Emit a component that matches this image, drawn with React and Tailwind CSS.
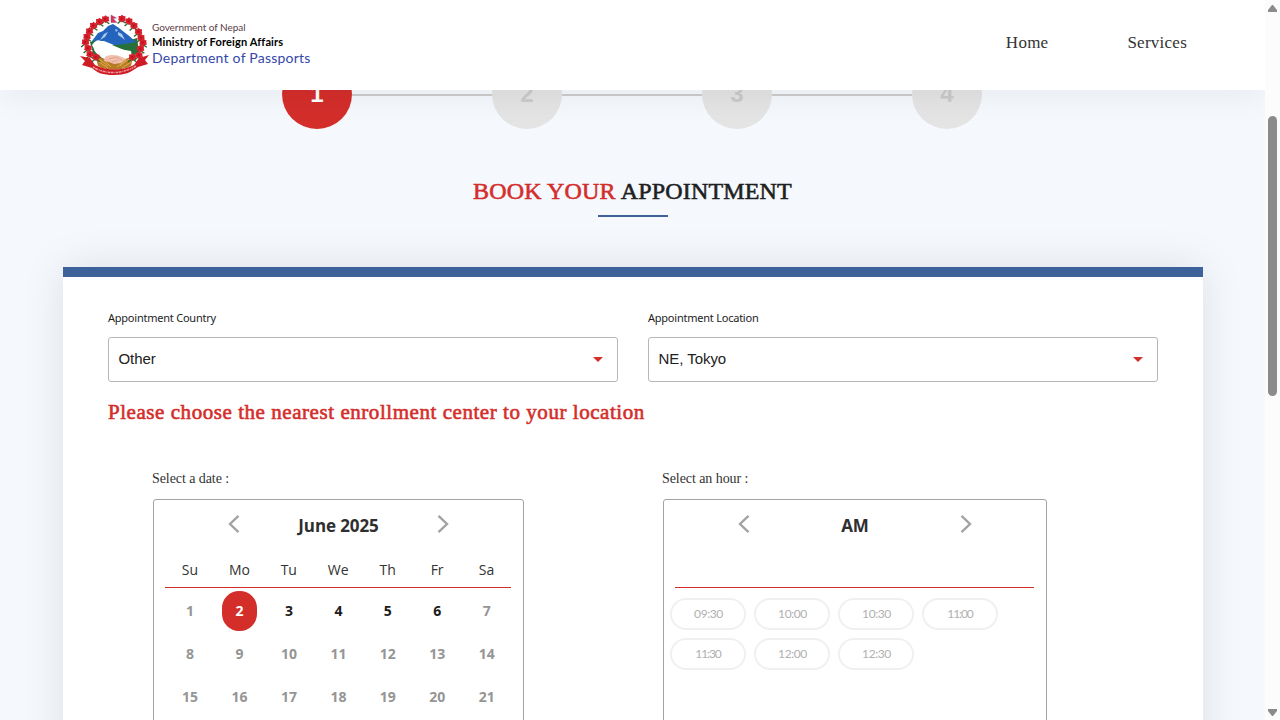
import React from "react";

const serif = "font-['Liberation_Serif',serif]";

function Rhododendron({ x, y }) {
  return (
    <g transform={`translate(${x} ${y}) scale(1.1)`}>
      <path d="M-1 2L-4 4.500M0 2L3.500 4.300" stroke="#2f6b2b" strokeWidth="1.300" />
      <path d="M0-3.300L1.300-2.300L3.200-2.100L3 0L3.500 1.900L1.300 2.400L0 3.600L-1.400 2.400L-3.500 1.700L-3 0L-3.200-2.200L-1.300-2.300Z" fill="#d81f2c" />
      <circle cx="-.3" cy=".2" r="1" fill="#b5101f" />
    </g>
  );
}

const flowers = [
  [25.5, 5], [19.5, 7.5], [13.5, 11.5], [9.5, 17], [7, 22.5], [5.5, 28], [8, 34], [10, 40], [16, 43],
  [42, 4.5], [49, 7], [54, 11.5], [58.5, 17.5], [61, 23.5], [63, 28.5], [60.5, 34.5], [59, 41], [52.5, 43],
];

function Emblem() {
  return (
    <svg width="70" height="62" viewBox="0 0 70 62" fill="none">
      <path d="M32 31L44 28L57 24L59 38L52 43L44 36ZM10 28L18 25L14 36L24 46L14 43Z" fill="#28703a" />
      <path d="M12 27L18 19L23 17L28 12L33 10L39 14L44 18L48 21L56 28L45 30L34 31L24 27Z" fill="#2564bd" />
      <path d="M35 15L38 16L36 18ZM38 18L42 20L45 26L41 23L38 21ZM24 20L28 18L25 23L20 26Z" fill="#a9c9ef" />
      <path d="M12 31C16 25 20 25 23 29C28 33 34 32 39 35L51 37L52 43L45 47L26 46L16 39Z" fill="#fff" />
      <path d="M16 44C23 42 26 47 34 48C43 49 46 43 53 43L51 52C42 57 26 57 18 52Z" fill="#b77b27" />
      <path d="M19 45L28 52M19 48L28 54M50 44L40 52M51 48L42 54M24 46L31 53M46 46L37 53" stroke="#e2b34f" strokeWidth=".9" />
      <path d="M25 43C30 40 37 41 42 43L46 45L41 49L34 50L29 48L24 47Z" fill="#f2bfad" />
      <path d="M29 45L36 43L42 46M32 48L38 46" stroke="#d99582" strokeWidth=".7" />
      {flowers.map(([x, y]) => <Rhododendron key={x + "-" + y} x={x} y={y} />)}
      <path d="M31 1L36.500 4L33 4.500L37 8.500H31Z" fill="#dc3156" stroke="#7a4a8e" strokeWidth=".4" />
      <path d="M0 42L10 44L15 51C27 57 42 57 54 51L59 44L69 41L65 46L68 50L58 53C51 58 46 61 34 61C22 61 18 59 12 54L2 51L5 47Z" fill="#ce1b25" />
      <path d="M13 53C26 61 43 60 56 52" stroke="#ec9a9a" strokeWidth="1.500" strokeDasharray="2 .6 3 .8 1 .6" />
    </svg>
  );
}

function Arrow({ right }) {
  return (
    <svg width="12" height="20" viewBox="0 0 12 20" fill="none" stroke="#a3a3a3" strokeWidth="2.400">
      <path d={right ? "M1.500 1.800L10 10L1.500 18.200" : "M10.500 1.800L2 10L10.500 18.200"} />
    </svg>
  );
}

function Stepper() {
  return (
    <div className="-mt-[31px] flex items-center pl-[282px]">
      {[1, 2, 3, 4].map((n) => (
        <React.Fragment key={n}>
          {n > 1 && <div className="mt-0.5 h-0.5 w-[140px] bg-[#cccccc]" />}
          <div className={`flex size-[70px] items-center justify-center rounded-full font-['Liberation_Sans',sans-serif] text-2xl font-bold ${n === 1 ? "bg-[#d42e2b] text-white" : "bg-[#e4e4e4] text-[#cacaca]"}`}>
            {n}
          </div>
        </React.Fragment>
      ))}
    </div>
  );
}

function Select({ label, value }) {
  return (
    <div className="flex flex-1 flex-col">
      <label className="h-[15px] font-['Noto_Sans',sans-serif] text-[11px] leading-[15px] tracking-[-0.23px] text-[#1c1c1c]">{label}</label>
      <div className="mt-3 flex h-[45px] items-center justify-between rounded-[3px] border border-[#b7b7b7] pl-[9.5px] pr-[14px]">
        <span className="-mt-0.5 font-['Liberation_Sans',sans-serif] text-[15px] leading-5 tracking-[-0.05px] text-[#212121]">{value}</span>
        <svg width="10" height="5" viewBox="0 0 10 5"><path d="M0 0H10L5 5Z" fill="#d42e2b" /></svg>
      </div>
    </div>
  );
}

function PanelHead({ title }) {
  return (
    <div className="flex h-[50px] items-center justify-between px-[74px]">
      <div className="-mt-[3px]"><Arrow /></div>
      <h3 className="mt-0.5 font-['Open_Sans',sans-serif] text-[17px] font-bold leading-6 tracking-[-0.1px] text-[#2f2f2f]">{title}</h3>
      <div className="-mt-[3px]"><Arrow right /></div>
    </div>
  );
}

function dayClass(day) {
  if (day === 2) return "bg-[#d42e2b] text-white";
  if (day > 2 && day < 7) return "text-[#1c1c1c]";
  return "text-[#959595]";
}

function Calendar() {
  const weekdays = ["Su", "Mo", "Tu", "We", "Th", "Fr", "Sa"];
  return (
    <div className="h-[420px] w-[371px] rounded-[3px] border border-[#a3a3a3] font-['Open_Sans',sans-serif] text-sm">
      <PanelHead title="June 2025" />
      <div className="ml-[11px] mr-[12px] grid h-[38px] grid-cols-7 border-b border-[#d42e2b] text-[#333]">
        {weekdays.map((d) => <div key={d} className="pl-[0.5px] pt-[10px] text-center leading-5">{d}</div>)}
      </div>
      <div className="ml-[11px] mr-[12px] mt-[1.5px] grid grid-cols-7">
        {Array.from({ length: 21 }, (_, i) => i + 1).map((d) => (
          <div key={d} className="flex h-[43px] items-center justify-center">
            <div className={`flex h-10 w-[35px] items-center justify-center rounded-[17px] pl-[0.8px] font-bold ${dayClass(d)}`}>{d}</div>
          </div>
        ))}
      </div>
    </div>
  );
}

function Hours() {
  const hours = ["09:30", "10:00", "10:30", "11:00", "11:30", "12:00", "12:30"];
  return (
    <div className="h-[420px] w-[384px] rounded-[3px] border border-[#a3a3a3]">
      <PanelHead title="AM" />
      <div className="ml-[11px] mr-[12px] h-[38px] border-b border-[#d42e2b]" />
      <div className="flex flex-wrap gap-2 pl-1.5 pt-[10px]">
        {hours.map((h) => (
          <div key={h} className={`flex h-8 w-[76px] items-center justify-center rounded-full border-2 border-[#f0f0f0] font-['Lato',sans-serif] text-xs text-[#b0b0b0] ${h.startsWith("11") ? "tracking-[-1.1px]" : "pl-px tracking-[-0.4px]"}`}>{h}</div>
        ))}
      </div>
    </div>
  );
}

function ScrollBar() {
  return (
    <div className="relative z-20 flex h-full w-[15px] flex-col items-center bg-[#fcfcfc] py-1">
      <svg width="9" height="8" viewBox="0 0 9 8"><path d="M4 1H5L9 6V8H0V6Z" fill="#8b8b8b" /></svg>
      <div className="mt-[104px] h-[280px] w-[9px] rounded-full bg-[#8b8b8b]" />
      <svg className="mt-auto" width="9" height="8" viewBox="0 0 9 8"><path d="M0 1H9V3L5 8H4L0 3Z" fill="#8b8b8b" /></svg>
    </div>
  );
}

export default function App() {
  return (
    <div className="flex h-[720px] w-[1280px] overflow-hidden bg-[#f5f9fe]">
      <div className="h-full w-[1265px]">
        <header className="relative z-10 flex h-[90px] items-center justify-between bg-white pl-[80px] pr-[77px] shadow-[0_10px_30px_rgba(0,0,0,0.05)]">
          <div className="flex items-center gap-[2px]">
            <Emblem />
            <div className="-mt-[5px] whitespace-nowrap font-['Lato',sans-serif]">
              <div className="text-[10px] leading-[14px] tracking-[-0.06px] text-[#5c4048]">Government of Nepal</div>
              <div className="text-[11px] font-bold leading-[16px] tracking-[0.14px] text-black">Ministry of Foreign Affairs</div>
              <div className="text-[14px] leading-[16px] tracking-[0.23px] text-[#3448a8]">Department of Passports</div>
            </div>
          </div>
          <nav className={`-mt-1 flex gap-[79px] pr-px text-[17px] leading-6 tracking-[0.25px] text-[#333] ${serif}`}>
            <a>Home</a>
            <a>Services</a>
          </nav>
        </header>
        <main>
          <Stepper />
          <div className="mt-[46px] flex flex-col items-center">
            <h1 className={`h-8 whitespace-nowrap text-[24px] font-normal leading-8 tracking-[0.18px] text-[#1f1f1f] [-webkit-text-stroke:0.6px] ${serif}`}>
              <span className="text-[#d42e2b]">BOOK YOUR</span> APPOINTMENT
            </h1>
            <div className="mt-2 h-0.5 w-[70px] bg-[#3e6199]" />
          </div>
          <section className="ml-[63px] mt-[50px] h-[600px] w-[1140px] border-t-10 border-[#3e6199] bg-white px-[45px] pt-[33px] shadow-[0_0_40px_rgba(0,0,0,0.1)]">
            <div className="flex gap-[30px]">
              <Select label="Appointment Country" value="Other" />
              <Select label="Appointment Location" value="NE, Tokyo" />
            </div>
            <h2 className={`mt-[18px] whitespace-nowrap text-[21px] font-normal leading-6 tracking-[0.55px] text-[#d42e2b] [-webkit-text-stroke:0.6px] ${serif}`}>
              Please choose the nearest enrollment center to your location
            </h2>
            <div className="mt-[45px] flex pl-[44px]">
              <div className="w-[510px]">
                <p className={`text-[14px] leading-5 tracking-[-0.07px] text-[#333] ${serif}`}>Select a date :</p>
                <div className="ml-px mt-[10px]"><Calendar /></div>
              </div>
              <div>
                <p className={`text-[14px] leading-5 tracking-[-0.07px] text-[#333] ${serif}`}>Select an hour :</p>
                <div className="ml-px mt-[10px]"><Hours /></div>
              </div>
            </div>
          </section>
        </main>
      </div>
      <ScrollBar />
    </div>
  );
}
